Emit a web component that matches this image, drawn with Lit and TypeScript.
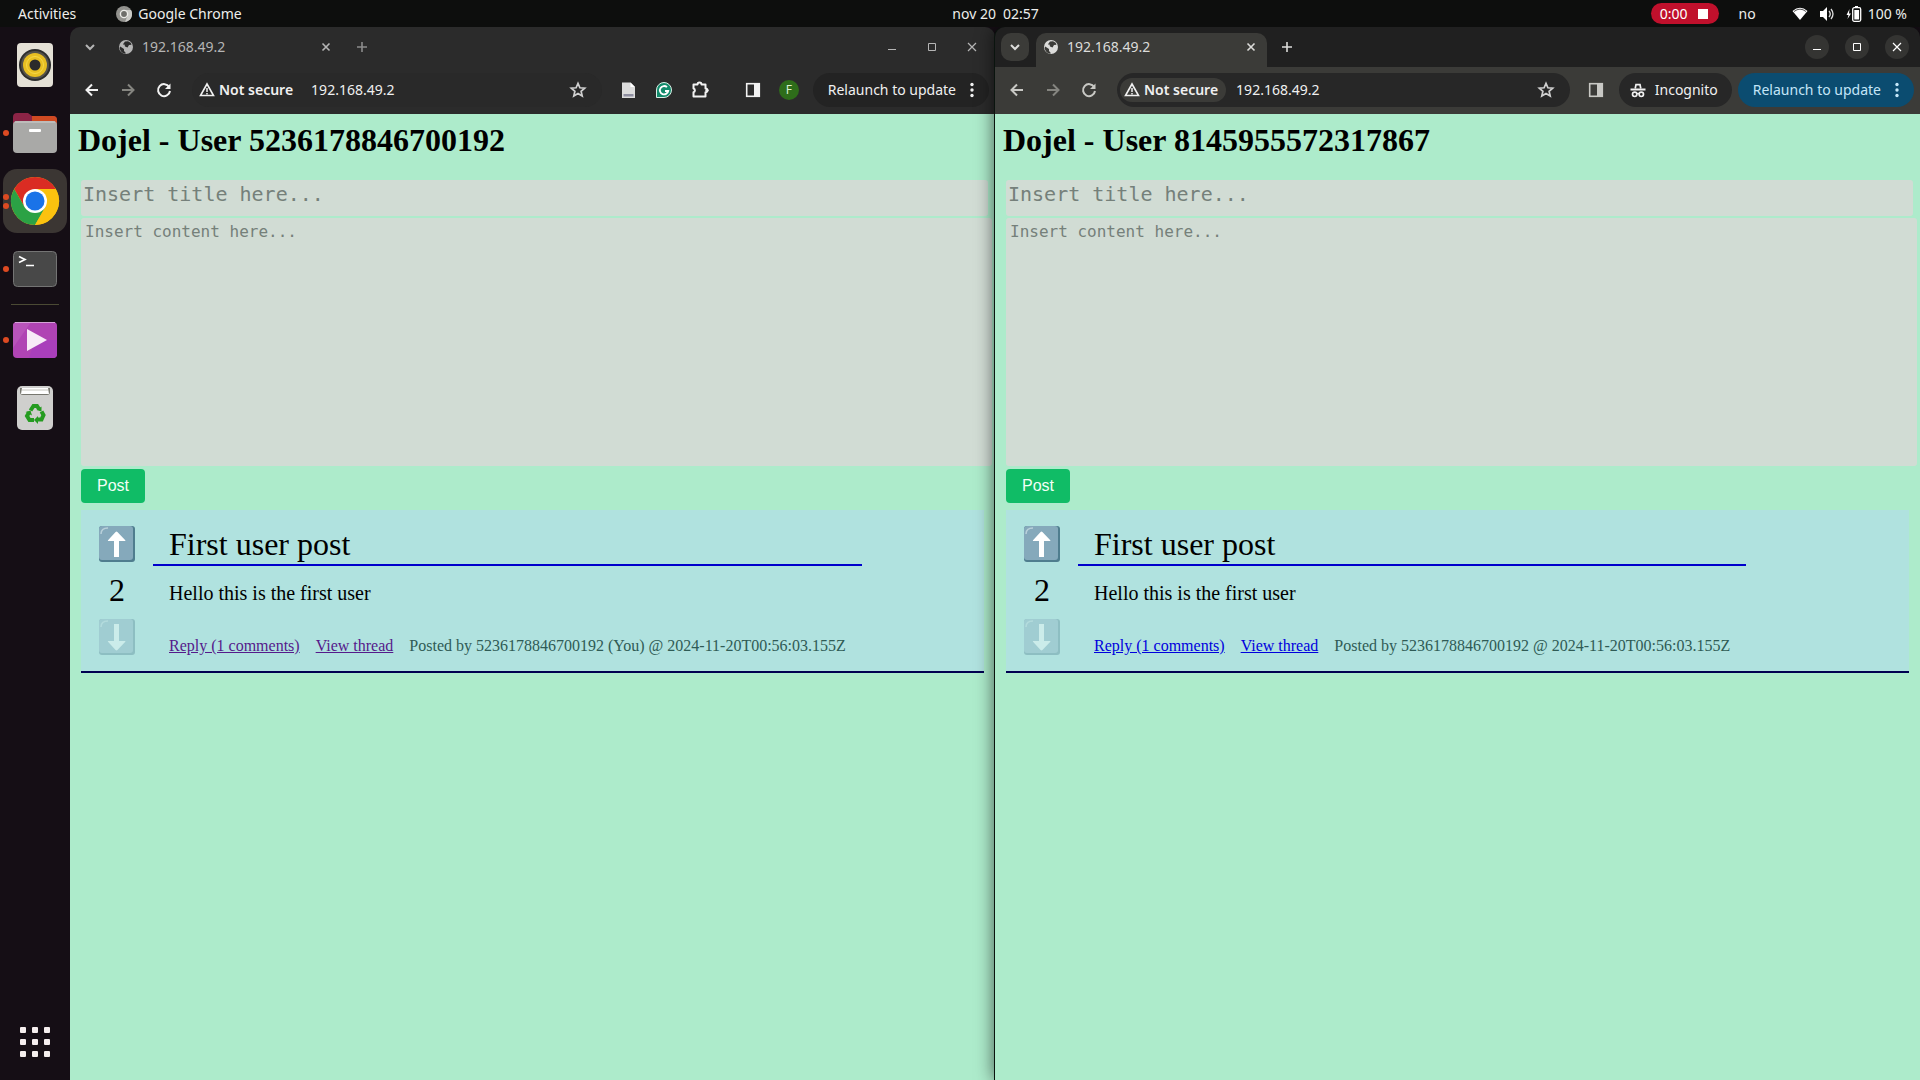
import { LitElement, html, css, svg, nothing } from "lit";
import { customElement, property } from "lit/decorators.js";
import { classMap } from "lit/directives/class-map.js";

const icon = (body: unknown, size = 20, box = 20) =>
  html`<svg width=${size} height=${size} viewBox="0 0 ${box} ${box}" fill="none" stroke="currentColor" stroke-width="2" aria-hidden="true">${body}</svg>`;

const chevron = icon(svg`<path d="M6 8l4 4 4-4" />`);
const close = icon(svg`<path d="M6.500 6.500l7 7M13.500 6.500l-7 7" stroke-width="1.600" />`);
const plus = icon(svg`<path d="M10 5v10M5 10h10" stroke-width="1.600" />`);
const back = icon(svg`<path d="M16 10H5M10 4.500L4.500 10l5.500 5.500" />`);
const forward = icon(svg`<path d="M4 10h11M10 4.500l5.500 5.500-5.500 5.500" />`);
const reload = icon(svg`<path d="M15.200 7A6 6 0 1 0 16 11" /><path d="M16.500 3.500v5.500h-5.500z" fill="currentColor" stroke="none" />`);
const warning = icon(svg`<path d="M8 2L14.500 13.500h-13z" stroke-width="1.600" /><path d="M8 6v4M8 11v1.500" stroke-width="1.500" />`, 16, 16);
const star = icon(svg`<path d="M10 3.400l1.900 4.400 4.800.4-3.600 3.100 1.100 4.700L10 13.500 5.800 16l1.100-4.700-3.600-3.100 4.800-.4z" stroke-width="1.700" />`);
const sidePanel = icon(svg`<rect x="3.700" y="3.700" width="12.600" height="12.600" stroke-width="1.600" /><path d="M11 4h5v12h-5z" fill="currentColor" stroke="none" />`);
const puzzle = icon(svg`<path d="M3.500 4.500h4a2 2 0 0 1 4 0h4v4a1.700 1.700 0 0 1 0 3.700v4.300h-12v-4.200a2 2 0 0 0 0-3.800z" stroke-linejoin="round" /><circle cx="17" cy="10.300" r="1.600" fill="currentColor" stroke="none" />`);
const doc = icon(svg`<path d="M4 2.500h8.500L17 7v11H4z" fill="#dcdcdc" stroke="none" /><path d="M12.500 2.500V7H17z" fill="#fff" stroke="none" /><path d="M5.500 14h10v2.500h-10z" fill="#8e8ea0" stroke="none" />`);
const grammar = icon(svg`<path d="M2.500 17.500V10a7.500 7.500 0 1 1 7.500 7.500z" fill="#128a6b" stroke="#d9efe6" stroke-width="1" /><path d="M13 7.200A4.200 4.200 0 1 0 14.200 11H11" stroke="#fff" stroke-width="1.800" />`);
const incognito = icon(svg`<path d="M7.200 8.500L8 4.600h4l.8 3.900" stroke-width="1.700" /><path d="M2.500 9.600h15" /><circle cx="6.700" cy="14.300" r="2.200" stroke-width="1.700" /><circle cx="13.300" cy="14.300" r="2.200" stroke-width="1.700" /><path d="M8.800 13.800q1.200-.8 2.400 0" stroke-width="1.400" />`);
const dots = html`<svg width="4" height="16" viewBox="0 0 4 16" fill="currentColor" aria-hidden="true"><circle cx="2" cy="2.500" r="1.700" /><circle cx="2" cy="8" r="1.700" /><circle cx="2" cy="13.500" r="1.700" /></svg>`;
const globe = icon(svg`<circle cx="8" cy="8" r="7" fill="currentColor" stroke="none" /><path d="M2.200 7.500l3.800 2.500v2l1.500 1.500v1.300A7 7 0 0 1 1.600 9zM7 2.500l3-.3 2.700 1.500.8 2-2.500.3-1.500 2.500-2.500-1-.5-2H4.800z" fill="var(--hole)" stroke="none" />`, 16, 16);
const minimize = icon(svg`<path d="M6 12.500h8" stroke-width="1" />`);
const maximize = icon(svg`<path d="M6.500 6.500h7v7h-7z" stroke-width="1" />`);
const shut = icon(svg`<path d="M6 6l8 8M14 6l-8 8" stroke-width="1.200" />`);

const arrow = (down: boolean) => html`<svg width="36" height="36" viewBox="0 0 36 36" aria-hidden="true">
  <rect x="0" y="0" width="36" height="36" rx="3" fill="#4f7d8e" />
  <rect x="0" y="0" width="34" height="34" rx="3" fill="#85a9bb" />
  <path d="M2 8Q2 2 9 2" fill="none" stroke="#b9d0da" stroke-width="1.500" />
  <path d=${down ? "M15 5h5v17h6q.8 0 .3.800L18.400 31q-.9.800-1.800 0L9 22.800Q8.500 22 9.300 22H15z" : "M15 31h5V15h6q.8 0 .3-.800L18.400 6q-.9-.800-1.800 0L9 14.200Q8.500 15 9.300 15H15z"} fill="#fff" />
</svg>`;

@customElement("forum-page")
class ForumPage extends LitElement {
  @property() user = "";
  @property() author = "";
  @property({ type: Boolean }) visited = false;

  static styles = css`
    :host { display: block; flex: 1; min-height: 0; overflow: hidden; background: #adebcb; color: #000;
      font-family: "Liberation Serif", serif; font-size: 16px; }
    .page { padding: 8px; }
    h1 { margin: 0 0 21px; font-size: 32px; line-height: 37px; white-space: nowrap; }
    .main { margin: 0 3px; }
    .field { display: block; width: 100%; border: 0; border-radius: 3px; background: #d1dcd4; color: #222;
      font-family: "DejaVu Sans Mono", monospace; outline: none; }
    .field::placeholder { color: #75807a; opacity: 1; }
    .title { height: 24px; padding: 2px 2px 10px; margin-bottom: 2px; font-size: 20px; line-height: 24px; }
    .content { height: 240px; padding: 4px; font-size: 16px; line-height: 19px; resize: none; }
    .post { display: block; margin: 3px 0 7px; padding: 8px 16px; border: 0; border-radius: 4px; background: #10bc66;
      color: #f2fff6; font: 16px/18px "Liberation Sans", sans-serif; }
    .card { display: flex; padding: 16px 0; border-bottom: 2px solid #000050; background: #b0e2df; }
    .votes { display: flex; flex-direction: column; align-items: center; justify-content: space-between; width: 72px; }
    .vote { display: flex; padding: 0; border: 0; background: none; }
    .vote:disabled { opacity: 0.35; }
    .count { font-size: 32px; line-height: 37px; }
    .body { min-width: 0; }
    h2 { margin: 0; padding: 0 16px 1px; border-bottom: 2px solid #0000cc; font-size: 32px; line-height: 37px; font-weight: 400; }
    .text { margin: 0; padding: 16px 16px 0; font-size: 20px; line-height: 23px; }
    .meta { display: flex; gap: 16px; padding: 32px 16px 0; line-height: 18px; white-space: nowrap; color: #2f5b55; }
    a { color: #0000dd; text-decoration: underline; }
    .visited a { color: #551a8b; }
  `;

  render() {
    return html`<div class="page">
      <h1>Dojel - User ${this.user}</h1>
      <div class="main">
        <form @submit=${(e: Event) => e.preventDefault()}>
          <input class="field title" aria-label="Title" placeholder="Insert title here..." />
          <textarea class="field content" aria-label="Content" placeholder="Insert content here..."></textarea>
          <button class="post">Post</button>
        </form>
        <article class="card">
          <div class="votes">
            <button class="vote" aria-label="Upvote">${arrow(false)}</button>
            <span class="count">2</span>
            <button class="vote" aria-label="Downvote" disabled>${arrow(true)}</button>
          </div>
          <div class="body">
            <h2>First user post</h2>
            <p class="text">Hello this is the first user</p>
            <div class=${classMap({ meta: true, visited: this.visited })}>
              <a href="#reply">Reply (1 comments)</a><a href="#thread">View thread</a>
              <span>Posted by ${this.author} @ 2024-11-20T00:56:03.155Z</span>
            </div>
          </div>
        </article>
      </div>
    </div>`;
  }
}

@customElement("browser-window")
class BrowserWindow extends LitElement {
  @property({ type: Boolean, reflect: true }) incognito = false;

  static styles = css`
    :host { --strip: #2b2b2b; --bar: #2b2b2b; --pill: #292929; --chip: transparent; --tab: transparent; --round: transparent;
      --action: #232323; --hole: #2b2b2b; --dim: #b5b5b5; --new: #8c8c8c; --nav: #f2f2f2;
      display: flex; flex-direction: column; flex: 1 1 0; min-width: 0; box-sizing: border-box; overflow: hidden;
      border-radius: 10px 10px 0 0; background: var(--strip); color: #f0f0f0; font: 14px/20px "Noto Sans", sans-serif; }
    :host([incognito]) { --strip: #202020; --bar: #3b3b38; --pill: #272727; --chip: #3b3b38; --tab: #3b3b38; --round: #343432;
      --action: #0b4c70; --hole: #3b3b38; --dim: #dcdcda; --new: #dcdcda; --nav: #c8c8c4;
      z-index: 1; box-shadow: -1px 0 0 #0a140e, -1px 0 18px rgba(0, 0, 0, 0.6); }
    button { display: flex; align-items: center; justify-content: center; padding: 0; border: 0; background: none; color: inherit; font: inherit; }
    svg { flex: none; }
    .strip { display: flex; align-items: center; height: 40px; padding: 0 11px 0 6px; color: var(--dim); }
    .menu { width: 28px; height: 28px; border-radius: 10px; background: var(--tab); }
    .tab { display: flex; align-items: center; align-self: flex-end; flex: 0 1 231px; box-sizing: border-box; height: 34px;
      margin: 0 6px 0 7px; padding: 0 6px 6px 7px; border-radius: 10px 10px 0 0; background: var(--tab); }
    .name { flex: 1; padding-left: 8px; }
    .new { width: 28px; height: 28px; color: var(--new); }
    .controls { display: flex; gap: 16px; margin-left: auto; color: var(--dim); }
    :host([incognito]) .controls { color: #fff; }
    .controls button { width: 24px; height: 24px; border-radius: 50%; background: var(--round); }
    .bar { display: flex; align-items: center; height: 45px; padding: 0 6px 2px 4px; background: var(--bar); }
    .nav { width: 36px; height: 34px; color: var(--nav); }
    .nav:disabled { color: #858580; }
    .address { display: flex; align-items: center; flex: 1; min-width: 0; height: 34px; margin: 0 8px 0 10px; border-radius: 17px; background: var(--pill); }
    .chip { display: flex; align-items: center; gap: 4px; height: 24px; margin-left: 3px; padding: 0 8px 0 4px; border-radius: 12px; background: var(--chip);
      font-weight: 600; white-space: nowrap; }
    .url { flex: 1; min-width: 0; padding: 0 10px; border: 0; background: none; color: #f0f0f0; font: inherit; outline: none; }
    .star { width: 36px; height: 34px; margin-right: 6px; color: #d0d0d0; }
    .spacer { width: 17px; }
    .avatar { width: 20px; height: 20px; border-radius: 50%; background: #2e6d1a; color: #dcefd4; font-size: 12px; line-height: 20px; }
    .mode { display: flex; align-items: center; gap: 7px; height: 34px; margin-left: 5px; padding: 0 14px 0 9px; border-radius: 17px; background: #272727; }
    .relaunch { height: 34px; gap: 14px; margin-left: 6px; padding: 0 15px; border-radius: 17px; background: var(--action); white-space: nowrap; }
    :host([incognito]) .relaunch { color: #c4e6f8; }
  `;

  render() {
    return html`
      <div class="strip">
        <button class="menu" aria-label="Search tabs">${chevron}</button>
        <div class="tab">${globe}<span class="name">192.168.49.2</span><button aria-label="Close tab">${close}</button></div>
        <button class="new" aria-label="New tab">${plus}</button>
        <div class="controls">
          <button aria-label="Minimize">${minimize}</button>
          <button aria-label="Maximize">${maximize}</button>
          <button aria-label="Close">${shut}</button>
        </div>
      </div>
      <div class="bar">
        <button class="nav" aria-label="Back">${back}</button>
        <button class="nav" aria-label="Forward" disabled>${forward}</button>
        <button class="nav" aria-label="Reload">${reload}</button>
        <div class="address">
          <button class="chip">${warning}Not secure</button>
          <input class="url" aria-label="Address" value="192.168.49.2" />
          <button class="star" aria-label="Bookmark">${star}</button>
        </div>
        ${this.incognito ? nothing : html`
          <button class="nav" aria-label="Document extension">${doc}</button>
          <button class="nav" aria-label="Writing extension">${grammar}</button>
          <button class="nav" aria-label="Extensions">${puzzle}</button>
          <span class="spacer"></span>`}
        <button class="nav" aria-label="Side panel">${sidePanel}</button>
        ${this.incognito
          ? html`<span class="mode">${incognito}Incognito</span>`
          : html`<button class="nav" aria-label="Profile"><span class="avatar">F</span></button>`}
        <button class="relaunch">Relaunch to update${dots}</button>
      </div>
      <slot></slot>
    `;
  }
}

const dockItems = [
  { label: "Music", running: 0, art: svg`
    <rect x="10" y="10" width="36" height="44" rx="4" fill="#e4e0d6" />
    <circle cx="28" cy="32" r="16" fill="#2d2d2d" /><circle cx="28" cy="32" r="14" fill="#55524a" />
    <circle cx="28" cy="32" r="12" fill="#e8bf22" /><circle cx="28" cy="32" r="8.500" fill="none" stroke="#f5d84a" />
    <circle cx="28" cy="32" r="5.500" fill="#2b2b2b" />` },
  { label: "Files", running: 1, art: svg`
    <path d="M6 16q0-4 4-4h11l4 3h21q4 0 4 4v12H6z" fill="#8c2446" /><path d="M25 15h21q4 0 4 4v8H25z" fill="#cf4a22" />
    <rect x="6" y="20" width="44" height="32" rx="4" fill="#a9a9a7" /><path d="M8 21h40" stroke="#cfcfcd" />
    <rect x="22" y="28" width="12" height="3" rx="1" fill="#fff" />` },
  { label: "Google Chrome", running: 2, active: true, art: svg`
    <circle cx="28" cy="32" r="24" fill="#fbc20f" />
    <path d="M28 20h20.800A24 24 0 0 0 7.200 20l10.400 18z" fill="#da2c23" />
    <path d="M38.400 38L28 56A24 24 0 0 1 7.200 20l10.400 18q10 8 20.800 0z" fill="#2ba245" />
    <path d="M28 20h20.800A24 24 0 0 1 28 56l10.400-18z" fill="#fbc20f" />
    <circle cx="28" cy="32" r="12" fill="#fff" /><circle cx="28" cy="32" r="9.500" fill="#1a73e8" />` },
  { label: "Terminal", running: 1, art: svg`
    <rect x="6.500" y="14.500" width="43" height="35" rx="4" fill="#484848" stroke="#747474" />
    <path d="M12 19.500l6 3-6 3M19 28.500h8" fill="none" stroke="#fff" stroke-width="1.700" />` },
  { label: "Videos", running: 1, divided: true, art: svg`
    <rect x="6" y="14" width="44" height="36" rx="4" fill="#b044b4" /><path d="M6 18q0-4 4-4h14L6 40z" fill="#b854ba" />
    <path d="M28 32h22v14q0 4-4 4H22z" fill="#a93fbb" /><path d="M8 14.500h40" stroke="#d5a3d8" />
    <path d="M20 21l20 11-20 11z" fill="#f7ebf7" />` },
  { label: "Trash", running: 0, art: svg`
    <rect x="10" y="10" width="36" height="44" rx="5" fill="#cfcfcd" /><path d="M13 12h30v4q0 3-3 3H16q-3 0-3-3z" fill="#77776f" />
    <path d="M15 12h26l1 6H14z" fill="#fff" /><path d="M15 14h26" stroke="#c4c4bc" />
    <g fill="none" stroke="#259b20" stroke-width="4"><path d="M23.500 34.500l3-4.500h3.500l2 3" /><path d="M34.500 35.500l2 3.500-2 4.500h-4.500" /><path d="M27 44h-4.500l-2.500-4 2-3.500" /></g>
    <path d="M34.500 30.500v5l-5-1.500zM31 40v8l-4-4zM18.500 36l5-1.500 1.500 5z" fill="#259b20" />` },
];

@customElement("app-root")
class AppRoot extends LitElement {
  static styles = css`
    :host { display: flex; flex-direction: column; height: 100vh; overflow: hidden; background: #150e15; color: #eeeeec;
      font: 14px/20px "Noto Sans", sans-serif; }
    button { padding: 0; border: 0; background: none; color: inherit; font: inherit; white-space: nowrap; }
    .top { position: relative; z-index: 2; display: flex; align-items: center; height: 27px; background: #0d0e0d; }
    .left { display: flex; align-items: center; gap: 40px; flex: 1 0 84px; box-sizing: border-box; padding-left: 18px; }
    .app { display: flex; align-items: center; gap: 6px; }
    .clock { display: flex; gap: 7px; }
    .right { display: flex; align-items: center; justify-content: flex-end; flex: 1 0 0; box-sizing: border-box; padding-right: 13px; }
    .record { display: flex; align-items: center; gap: 10px; height: 21px; padding: 0 11px 0 9px; border-radius: 11px; background: #c0102c; color: #fff; }
    .stop { width: 10px; height: 10px; background: #fff; }
    .lang { margin: 0 36px 0 20px; }
    .status { display: flex; align-items: center; gap: 11px; margin-right: 6px; }
    .desk { display: flex; flex: 1; min-height: 0; }
    .dock { display: flex; flex-direction: column; width: 70px; box-sizing: border-box; padding: 4px 0 6px; }
    .item { display: flex; align-items: center; height: 68px; width: 70px; }
    .marks { position: relative; z-index: 1; display: flex; flex-direction: column; gap: 3px; width: 6px; margin-left: 3px; }
    .mark { width: 6px; height: 6px; border-radius: 50%; background: #dd4a22; }
    .tile { display: flex; align-items: center; width: 64px; height: 64px; box-sizing: border-box; padding-left: 4px; margin-left: -6px; border-radius: 14px; }
    .tile.active { background: #3b3633; }
    .rule { height: 1px; margin: 1px 11px; background: #4b4a34; }
    .apps { margin-top: auto; height: 64px; display: flex; align-items: center; justify-content: center; }
  `;

  render() {
    return html`
      <header class="top">
        <div class="left">
          <button>Activities</button>
          <button class="app">
            <svg width="16" height="16" viewBox="0 0 16 16" aria-hidden="true"><circle cx="8" cy="8" r="8" fill="#92928e" /><path d="M8 4h7A8 8 0 0 1 9 16l2.500-6z" fill="#cacac6" /><circle cx="8" cy="8" r="4.300" fill="#ecece8" /><circle cx="8" cy="8" r="2.900" fill="#6e6e6a" /></svg>
            Google Chrome
          </button>
        </div>
        <time class="clock"><span>nov 20</span><span>02:57</span></time>
        <div class="right">
          <button class="record">0:00<span class="stop"></span></button>
          <span class="lang">no</span>
          <div class="status">
            <svg width="16" height="16" viewBox="0 0 16 16" aria-hidden="true"><path d="M.5 5Q8-1.500 15.500 5L8 14z" fill="#fff" /><path d="M2 5.500Q8 .8 14 5.500" fill="none" stroke="#555" /></svg>
            <svg width="16" height="16" viewBox="0 0 16 16" aria-hidden="true"><path d="M1 5h3l4-4v14l-4-4H1z" fill="#fff" /><path d="M10 5q2.500 3 0 6M12 3q4 5 0 10" fill="none" stroke="#ddd" stroke-width="1.300" /></svg>
            <svg width="16" height="16" viewBox="0 0 16 16" aria-hidden="true"><path d="M3.500 3L.5 9h2L1.500 13 5 7.500H3z" fill="#fff" /><path d="M9 0h3v2H9z" fill="#fff" /><rect x="6.700" y="1.700" width="8" height="13.600" rx="1.500" fill="none" stroke="#fff" stroke-width="1.300" /><path d="M8.300 4h4.800v9.500H8.300z" fill="#fff" /></svg>
          </div>
          <span>100 %</span>
        </div>
      </header>
      <div class="desk">
        <nav class="dock" aria-label="Dock">
          ${dockItems.map((d) => html`
            ${d.divided ? html`<div class="rule"></div>` : nothing}
            <button class="item" aria-label=${d.label}>
              <span class="marks">${Array.from({ length: d.running }, () => html`<span class="mark"></span>`)}</span>
              <span class=${classMap({ tile: true, active: !!d.active })}>
                <svg width="56" height="64" viewBox="0 0 56 64" aria-hidden="true">${d.art}</svg>
              </span>
            </button>`)}
          <button class="apps" aria-label="Show applications">
            <svg width="30" height="30" viewBox="0 0 30 30" fill="#f5eeee" aria-hidden="true">
              ${[0, 12, 24].map((y) => [0, 12, 24].map((x) => svg`<rect x=${x} y=${y} width="6" height="6" rx="1" />`))}
            </svg>
          </button>
        </nav>
        <browser-window><forum-page user="5236178846700192" author="5236178846700192 (You)" visited></forum-page></browser-window>
        <browser-window incognito><forum-page user="8145955572317867" author="5236178846700192"></forum-page></browser-window>
      </div>
    `;
  }
}
